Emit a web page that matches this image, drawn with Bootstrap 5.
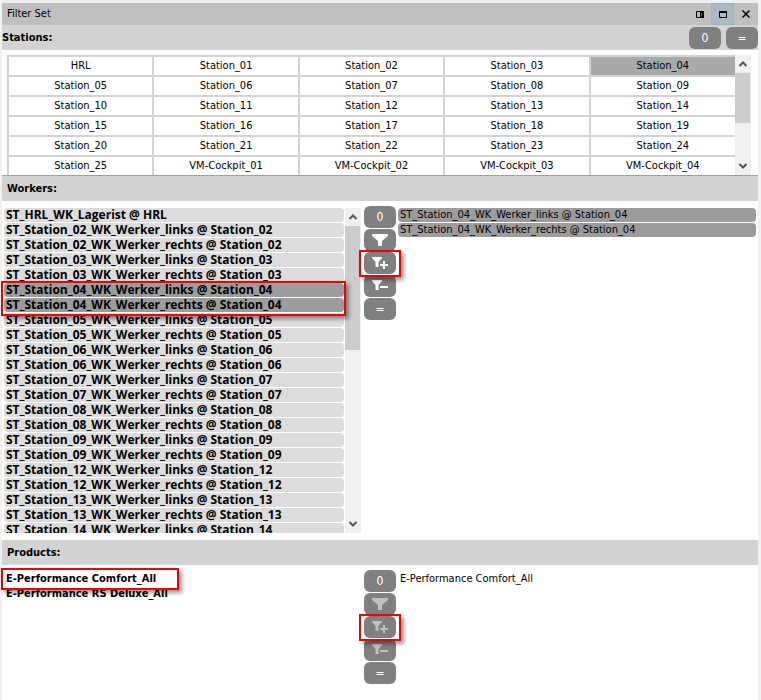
<!DOCTYPE html>
<html lang="en">
<head>
<meta charset="utf-8">
<meta name="viewport" content="width=device-width, initial-scale=1">
<title>Filter Set</title>
<link rel="stylesheet" href="https://cdn.jsdelivr.net/npm/bootstrap@5.3.0/dist/css/bootstrap.min.css">
<style>
body { background: #f0f0f0; color: #000; font: 11px/14px Tahoma, "DejaVu Sans Condensed", "DejaVu Sans", sans-serif; }
.panel { margin: 3px 3px 0 2px; min-height: calc(100vh - 3px); background: #fff; }
.title-bar { background: #bfbfbf; height: 22px; padding-left: 5px; padding-right: 1px; }
.win-btn { width: 23px; height: 22px; padding: 0; border: 1px solid transparent; background: none; display: flex; align-items: center; justify-content: center; }
.win-btn.current { background: #a9b8c4; border-color: #90b4d0; }
.section-bar { background: #d3d3d3; height: 25px; padding: 0 5px; }
.section-bar.first { padding: 0; gap: 5px; }
.section-bar h2 { font-size: 11px; line-height: 14px; font-weight: 700; margin: 0; }
.tool { width: 32px; height: 22px; padding: 0; border: 0; border-radius: 6px; background: #808080; color: #fff; font-size: 12px; line-height: 22px; display: flex; align-items: center; justify-content: center; }
.tool:disabled { color: #c0c0c0; }
.stations { padding: 5px 7px 0 5px; border-bottom: 1px solid #a0a0a0; height: 126px; overflow: hidden; }
.station-grid { table-layout: fixed; width: 100%; border-collapse: collapse; }
.station-grid td { height: 20px; padding: 0; border: 1px solid #d3d3d3; border-top-width: 2px; border-left-width: 2px; text-align: center; }
.station-grid td:last-child { border-right: 0; }
.station-grid td.picked { background: #a9a9a9; }
.scroller { width: 16px; background: #f0f0f0; flex: none; }
.scroller svg { display: block; width: 16px; height: 18px; flex: none; }
.thumb { width: 15px; background: #cdcdcd; }
.thumb-s { height: 50px; }
.thumb-l { height: 124px; }
.section-body { padding: 5px 0 7px; }
.work-list { height: 325px; }
.entries { list-style: none; margin: 0; padding: 0; }
.entries li { height: 14px; margin-bottom: 1px; padding-left: 2px; border-radius: 4px; white-space: nowrap; }
.entries.filled li { background: #dcdcdc; }
.entries.filled li.picked { background: #9c9c9c; }
.entries.wide { font-family: "Open Sans", "Noto Sans", sans-serif; font-size: 12px; margin-right: 1px; }
.left-col { width: 359px; padding-left: 2px; margin-top: 2px; flex: none; }
.tools-col { width: 32px; margin-left: 3px; flex: none; gap: 1px; }
.right-col { padding: 2px 2px 0; }
.outline-mark { position: absolute; z-index: 2; border: 2px solid #f00000; box-shadow: 3px 3px 4px rgba(0,0,0,.4); pointer-events: none; }
.outline-mark.on-tool { inset: -2px -5px -3px -5px; }
.outline-mark.on-rows { top: 73px; left: -1px; right: 15px; height: 35px; }
.outline-mark.on-product { top: -4px; left: -1px; width: 178px; height: 22px; }
</style>
<script src="https://cdn.jsdelivr.net/npm/bootstrap@5.3.0/dist/js/bootstrap.bundle.min.js"></script>
</head>
<body>
<svg class="d-none" aria-hidden="true">
  <symbol id="funnel" viewBox="0 0 16 12"><path fill="currentColor" d="M0 0h16v2l-6 5v5H6V7L0 2z"/></symbol>
  <symbol id="funnel-plus" viewBox="0 0 18 12"><path fill="currentColor" d="M1 0h10v1L7.500 5v5h-3V5L1 1zM12 4h2v3h3v2h-3v3h-2V9H9V7h3z"/></symbol>
  <symbol id="funnel-minus" viewBox="0 0 18 12"><path fill="currentColor" d="M1 0h10v1L7.500 5v5h-3V5L1 1zM9 6h8v2H9z"/></symbol>
  <symbol id="up" viewBox="0 0 16 18"><path fill="none" stroke="#555" stroke-width="2" d="M4.500 11L8 7.500l3.500 3.500"/></symbol>
  <symbol id="down" viewBox="0 0 16 18"><path fill="none" stroke="#555" stroke-width="2" d="M4.500 7L8 10.500 11.500 7"/></symbol>
</svg>
<main class="panel">
  <header class="title-bar d-flex align-items-center">
    <span class="me-auto">Filter Set</span>
    <button class="win-btn" type="button" aria-label="Dock"><svg width="8" height="7"><path d="M.5 .5h7v6h-7z" fill="none" stroke="#000"/><path d="M4 0h4v7H4z"/><path d="M5.500 2v3" stroke="#777"/></svg></button>
    <button class="win-btn current" type="button" aria-label="Maximize"><svg width="8" height="7"><path d="M.5 .5h7v6h-7z" fill="none" stroke="#000"/><path d="M0 0h8v2H0z"/></svg></button>
    <button class="win-btn" type="button" aria-label="Close"><svg width="8" height="8"><path d="M.5 .5l7 7m0-7l-7 7" stroke="#000" stroke-width="1.500"/></svg></button>
  </header>

  <section>
    <div class="section-bar first d-flex align-items-center">
      <h2 class="me-auto">Stations:</h2>
      <button class="tool" type="button">0</button>
      <button class="tool" type="button">=</button>
    </div>
    <div class="stations d-flex">
      <table class="station-grid">
        <tbody>
          <tr><td>HRL</td><td>Station_01</td><td>Station_02</td><td>Station_03</td><td class="picked">Station_04</td></tr>
          <tr><td>Station_05</td><td>Station_06</td><td>Station_07</td><td>Station_08</td><td>Station_09</td></tr>
          <tr><td>Station_10</td><td>Station_11</td><td>Station_12</td><td>Station_13</td><td>Station_14</td></tr>
          <tr><td>Station_15</td><td>Station_16</td><td>Station_17</td><td>Station_18</td><td>Station_19</td></tr>
          <tr><td>Station_20</td><td>Station_21</td><td>Station_22</td><td>Station_23</td><td>Station_24</td></tr>
          <tr><td>Station_25</td><td>VM-Cockpit_01</td><td>VM-Cockpit_02</td><td>VM-Cockpit_03</td><td>VM-Cockpit_04</td></tr>
        </tbody>
      </table>
      <div class="scroller d-flex flex-column">
        <svg><use href="#up"/></svg><div class="thumb thumb-s"></div><svg class="mt-auto"><use href="#down"/></svg>
      </div>
    </div>
  </section>

  <section>
    <div class="section-bar d-flex align-items-center"><h2>Workers:</h2></div>
    <div class="section-body d-flex">
      <div class="left-col d-flex work-list position-relative">
        <ul class="entries filled wide fw-bold flex-grow-1 overflow-hidden">
          <li>ST_HRL_WK_Lagerist @ HRL</li>
          <li>ST_Station_02_WK_Werker_links @ Station_02</li>
          <li>ST_Station_02_WK_Werker_rechts @ Station_02</li>
          <li>ST_Station_03_WK_Werker_links @ Station_03</li>
          <li>ST_Station_03_WK_Werker_rechts @ Station_03</li>
          <li class="picked">ST_Station_04_WK_Werker_links @ Station_04</li>
          <li class="picked">ST_Station_04_WK_Werker_rechts @ Station_04</li>
          <li>ST_Station_05_WK_Werker_links @ Station_05</li>
          <li>ST_Station_05_WK_Werker_rechts @ Station_05</li>
          <li>ST_Station_06_WK_Werker_links @ Station_06</li>
          <li>ST_Station_06_WK_Werker_rechts @ Station_06</li>
          <li>ST_Station_07_WK_Werker_links @ Station_07</li>
          <li>ST_Station_07_WK_Werker_rechts @ Station_07</li>
          <li>ST_Station_08_WK_Werker_links @ Station_08</li>
          <li>ST_Station_08_WK_Werker_rechts @ Station_08</li>
          <li>ST_Station_09_WK_Werker_links @ Station_09</li>
          <li>ST_Station_09_WK_Werker_rechts @ Station_09</li>
          <li>ST_Station_12_WK_Werker_links @ Station_12</li>
          <li>ST_Station_12_WK_Werker_rechts @ Station_12</li>
          <li>ST_Station_13_WK_Werker_links @ Station_13</li>
          <li>ST_Station_13_WK_Werker_rechts @ Station_13</li>
          <li>ST_Station_14_WK_Werker_links @ Station_14</li>
        </ul>
        <div class="scroller d-flex flex-column ms-auto">
          <svg><use href="#up"/></svg><div class="thumb thumb-l"></div><svg class="mt-auto"><use href="#down"/></svg>
        </div>
        <span class="outline-mark on-rows"></span>
      </div>
      <div class="tools-col d-grid align-content-start">
        <button class="tool" type="button">0</button>
        <button class="tool" type="button" aria-label="Filter"><svg width="16" height="12"><use href="#funnel"/></svg></button>
        <div class="position-relative"><button class="tool" type="button" aria-label="Add to filter"><svg width="18" height="12"><use href="#funnel-plus"/></svg></button><span class="outline-mark on-tool"></span></div>
        <button class="tool" type="button" aria-label="Remove from filter"><svg width="18" height="12"><use href="#funnel-minus"/></svg></button>
        <button class="tool" type="button">=</button>
      </div>
      <div class="right-col flex-grow-1">
        <ul class="entries filled">
          <li class="picked">ST_Station_04_WK_Werker_links @ Station_04</li>
          <li class="picked">ST_Station_04_WK_Werker_rechts @ Station_04</li>
        </ul>
      </div>
    </div>
  </section>

  <section>
    <div class="section-bar d-flex align-items-center"><h2>Products:</h2></div>
    <div class="section-body d-flex">
      <div class="left-col position-relative">
        <ul class="entries fw-bold">
          <li>E-Performance Comfort_All</li>
          <li>E-Performance RS Deluxe_All</li>
        </ul>
        <span class="outline-mark on-product"></span>
      </div>
      <div class="tools-col d-grid align-content-start">
        <button class="tool" type="button">0</button>
        <button class="tool" type="button" disabled aria-label="Filter"><svg width="16" height="12"><use href="#funnel"/></svg></button>
        <div class="position-relative"><button class="tool" type="button" disabled aria-label="Add to filter"><svg width="18" height="12"><use href="#funnel-plus"/></svg></button><span class="outline-mark on-tool"></span></div>
        <button class="tool" type="button" disabled aria-label="Remove from filter"><svg width="18" height="12"><use href="#funnel-minus"/></svg></button>
        <button class="tool" type="button">=</button>
      </div>
      <div class="right-col flex-grow-1">
        <ul class="entries"><li>E-Performance Comfort_All</li></ul>
      </div>
    </div>
  </section>
</main>
</body>
</html>
